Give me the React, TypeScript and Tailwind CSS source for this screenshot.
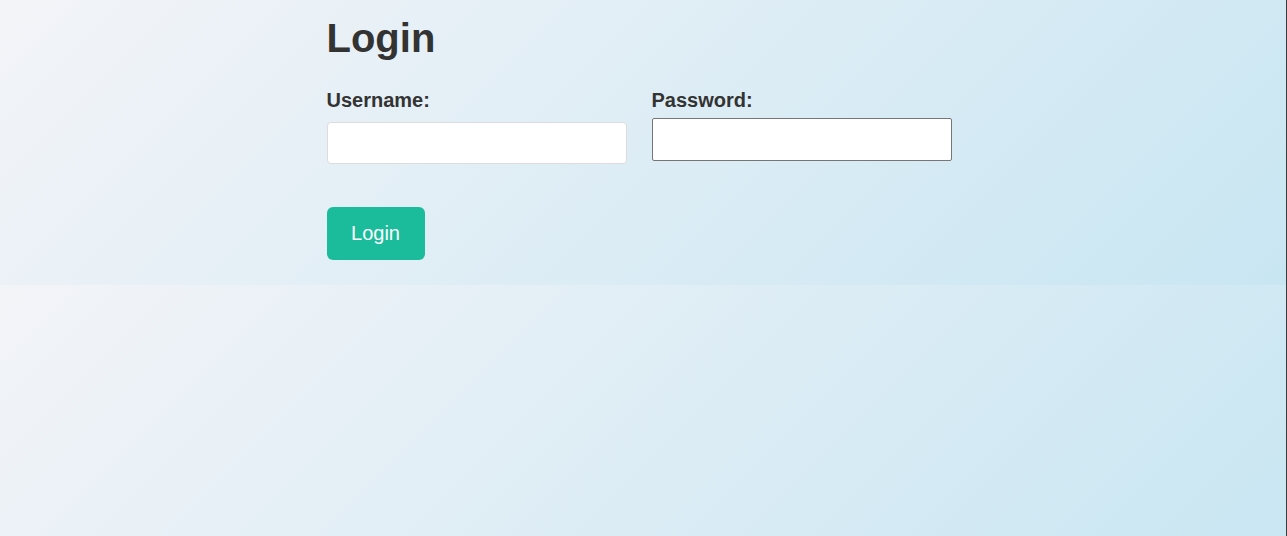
export default function App() {
  return (
    <div className="min-h-screen border-r border-[#3a3a3a] bg-[linear-gradient(135deg,#f3f4f8_0%,#c8e6f2_100%)] bg-[length:100%_285px] font-['Liberation_Sans',Arial,sans-serif] text-[#333]">
      <div className="mx-auto w-[633px] pt-[15px] pb-[25px]">
        <h1 className="text-[40px] font-bold leading-[46px] text-[#333]">Login</h1>

        {/* Fields */}
        <div className="mt-[28px] flex items-start gap-[25px]">
          <div className="w-[300px]">
            <label className="block text-[20px] font-bold leading-[23px]">Username:</label>
            <input
              type="text"
              className="mt-[10px] block h-[42px] w-[300px] rounded-[4px] border border-[#dcdcdc] bg-white px-[10px] text-base outline-none"
            />
          </div>
          <div className="w-[300px]">
            <label className="block text-[20px] font-bold leading-[23px]">Password:</label>
            <input
              type="password"
              className="mt-[6px] block h-[43px] w-[300px] rounded-[2px] border border-[#767676] bg-white px-[10px] text-base outline-none"
            />
          </div>
        </div>

        <button className="mt-[43px] block h-[53px] w-[98px] rounded-[6px] bg-[#1abc9c] text-[20px] leading-[23px] text-white">
          Login
        </button>
      </div>
    </div>
  );
}
